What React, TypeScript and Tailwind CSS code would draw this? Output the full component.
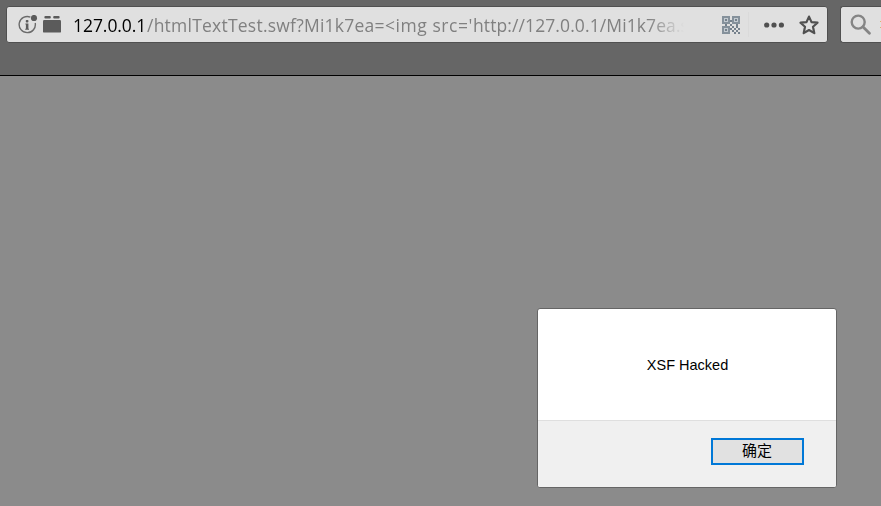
import React from 'react';

function InfoIcon() {
  return (
    <svg className="shrink-0" width="20" height="20" viewBox="0 0 20 20" fill="none">
      <path d="M12.4 2.1A8.1 8.1 0 1 0 17.2 8" stroke="#6b6b6b" strokeWidth="1.4" />
      <circle cx="16" cy="3" r="3.1" fill="#5b5b5b" />
      <rect x="7.8" y="5" width="2.6" height="2.4" rx=".7" fill="#5b5b5b" />
      <path d="M7.4 8.6h3v5.2h.6v1H7.2v-1h.7V9.6h-.5z" fill="#5b5b5b" />
    </svg>
  );
}

function PluginIcon() {
  return (
    <svg className="shrink-0" width="18" height="17" viewBox="0 0 18 17" fill="#5b5b5b">
      <rect x="1.4" y="0" width="6.4" height="2.4" rx="1" />
      <rect x="10.2" y="0" width="6.4" height="2.4" rx="1" />
      <rect x="0" y="4" width="18" height="12.6" rx="1.2" />
    </svg>
  );
}

function QrIcon() {
  return (
    <svg className="shrink-0" width="18" height="18" viewBox="0 0 18 18" shapeRendering="crispEdges">
      <path d="M0 0h8v8H0zM10 0h8v8h-8zM0 10h8v8H0z" fill="#c3cad0" />
      <g fill="none" stroke="#85919b" strokeWidth="2">
        <rect x="1" y="1" width="6" height="6" />
        <rect x="11" y="1" width="6" height="6" />
        <rect x="1" y="11" width="6" height="6" />
      </g>
      <g fill="#75818c">
        <path d="M3 3h2v2H3zM13 3h2v2h-2zM3 13h2v2H3z" />
        <path d="M8 4h2v2H8zM3 8h2v2H3zM8 8h2v2H8zM14 8h2v2h-2zM10 10h2v2h-2zM12 12h2v2h-2zM14 10h2v2h-2zM8 12h2v2H8zM10 14h2v2h-2zM14 14h2v2h-2zM16 12h2v2h-2zM12 16h2v2h-2zM16 16h2v2h-2z" />
      </g>
    </svg>
  );
}

function StarIcon() {
  return (
    <svg className="shrink-0" width="20" height="20" viewBox="0 0 20 20" fill="none">
      <path
        d="M10 1.6l2.5 5.5 6 .6-4.5 4.1 1.3 6.3-5.3-3.1-5.3 3.1L6 11.8 1.5 7.7l6-.6z"
        stroke="#505050"
        strokeWidth="2.2"
        strokeLinejoin="round"
      />
    </svg>
  );
}

function SearchIcon() {
  return (
    <svg className="shrink-0" width="21" height="21" viewBox="0 0 21 21" fill="none" stroke="#858585">
      <circle cx="8.2" cy="8.1" r="6.5" strokeWidth="2.4" />
      <path d="M13.1 13l6.3 6.2" strokeWidth="2.8" strokeLinecap="round" />
    </svg>
  );
}

export default function App() {
  return (
    <div className="flex h-[506px] w-[881px] flex-col overflow-hidden bg-[#8b8b8b]">
      <header className="flex h-[76px] shrink-0 border-b border-black bg-[#666666] pt-[6px] pl-[6px]">
        <div className="flex h-[37px] w-[822px] shrink-0 items-center rounded-[3px] border border-[#505050] bg-[#e0e0e0] pl-[11px]">
          <div className="flex">
            <InfoIcon />
          </div>
          <div className="ml-[5px] flex">
            <PluginIcon />
          </div>
          <div className="ml-[12px] flex w-[612px] shrink-0 overflow-hidden whitespace-pre pt-px font-['Open_Sans','Noto_Sans',sans-serif] text-[17.5px] leading-[30px] text-[#808080] [mask-image:linear-gradient(to_right,black_575px,transparent_611px)]">
            <span className="w-[74px] shrink-0 tracking-[-0.06px] text-black">127.0.0.1</span>
            <span className="w-[238px] shrink-0 tracking-[0.23px]">/htmlTextTest.swf?Mi1k7ea=</span>
            <span className="w-[88px] shrink-0 tracking-[0.55px]">&lt;img src='</span>
            <span className="shrink-0 tracking-[0.1px]">http://127.0.0.1/Mi1k7ea.s</span>
          </div>
          <div className="ml-[37px] flex">
            <QrIcon />
          </div>
          <div className="ml-[8px] h-[25px] w-px bg-[#dadada]" />
          <svg className="ml-[15px] shrink-0" width="20" height="6" viewBox="0 0 20 6" fill="#505050">
            <circle cx="2.7" cy="3" r="2.6" />
            <circle cx="10" cy="3" r="2.6" />
            <circle cx="17.4" cy="3" r="2.6" />
          </svg>
          <div className="ml-[15px] flex">
            <StarIcon />
          </div>
        </div>
        <div className="ml-[12px] flex h-[37px] flex-1 items-center overflow-hidden rounded-l-[3px] border border-r-0 border-[#505050] bg-[#e0e0e0] pl-[9px]">
          <SearchIcon />
          <div className="ml-[9px] flex flex-col gap-[5px]">
            <i className="h-px w-px bg-[#dfb071]" />
            <i className="h-px w-px bg-[#dfb071]" />
          </div>
        </div>
      </header>
      <main className="flex flex-1 items-start justify-end pt-[232px] pr-[44px]">
        <section className="flex h-[180px] w-[300px] flex-col overflow-hidden rounded-[3px] border border-[#656565] bg-white">
          <div className="flex h-[111px] items-center justify-center pt-[2px] pl-px font-['Liberation_Sans',Arial,sans-serif] text-[14.5px] text-black">
            <span>XSF Hacked</span>
          </div>
          <footer className="flex flex-1 items-start justify-end border-t border-[#dfdfdf] bg-[#f0f0f0] pt-[17px] pr-[32px]">
            <button className="flex h-[27px] w-[93px] items-center justify-center border-2 border-[#0078d7] bg-[#e1e1e1] pr-px pb-[3px] font-['Noto_Sans_CJK_SC',sans-serif] text-[15px] text-black">
              确定
            </button>
          </footer>
        </section>
      </main>
    </div>
  );
}
